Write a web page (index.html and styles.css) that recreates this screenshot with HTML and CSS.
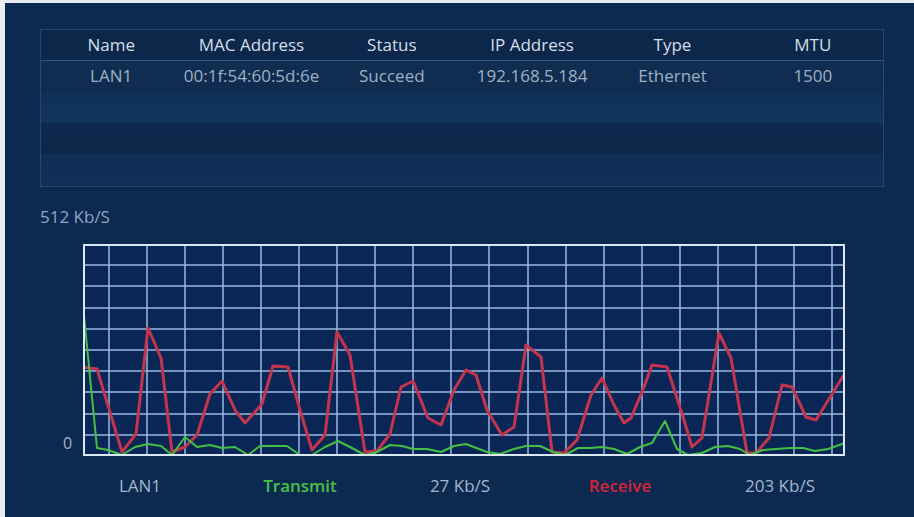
FILE: index.html
```html
<!DOCTYPE html>
<html>
<head>
<title>Network Load</title>
<link rel="stylesheet" href="styles.css">
</head>
<body>
<div class="screen">
  <!-- interface list -->
  <div class="nic-table">
    <div class="row head">
      <span>Name</span><span>MAC Address</span><span>Status</span>
      <span>IP Address</span><span>Type</span><span>MTU</span>
    </div>
    <div class="row data">
      <span>LAN1</span><span>00:1f:54:60:5d:6e</span><span>Succeed</span>
      <span>192.168.5.184</span><span>Ethernet</span><span>1500</span>
    </div>
    <div class="row blank band1"></div>
    <div class="row blank band2"></div>
    <div class="row blank band3"></div>
  </div>

  <div class="scale">512 Kb/S</div>

  <!-- traffic graph -->
  <div class="graph-row">
    <div class="zero">0</div>
    <svg class="graph" width="762" height="212" viewBox="0 0 762 212">
      <rect x="0" y="0" width="762" height="212" class="plot-bg"/>
      <path class="grid" d="M26 0V212M64 0V212M102 0V212M140 0V212M178 0V212M216 0V212M254 0V212M292 0V212M330 0V212M368 0V212M406 0V212M445 0V212M483 0V212M521 0V212M559 0V212M597 0V212M635 0V212M673 0V212M711 0V212M749 0V212
        M0 21H762M0 42H762M0 64H762M0 85H762M0 106H762M0 127H762M0 148H762M0 170H762M0 191H762"/>
      <polyline class="rx" points="0,123 14,125 39,208 53,190 65,84 78,114 89,208 102,203 114,191 127,150 139,137 152,166 162,179 179,160 190,122 205,123 217,166 229,206 242,191 254,88 267,111 282,208 294,207 307,190 318,143 330,137 345,174 358,181 371,146 383,126 393,131 404,166 419,191 431,183 443,101 458,113 469,208 481,209 494,196 508,151 519,134 531,161 541,179 548,174 561,143 569,121 584,123 601,176 609,203 619,194 636,89 648,114 664,209 673,209 686,194 699,141 709,143 723,173 733,176 762,129"/>
      <polyline class="tx" points="1,72 14,204 25,206 39,211 52,203 65,200 78,202 89,211 102,193 114,203 127,201 139,204 152,203 165,211 177,202 204,202 217,211 229,211 242,203 255,197 267,203 282,211 294,208 307,201 319,202 330,205 344,205 358,208 371,202 383,200 404,208 417,210 431,205 443,202 457,202 470,208 482,211 495,204 507,204 519,203 531,205 544,210 557,203 569,199 582,177 594,205 605,211 619,209 632,203 645,202 657,205 667,211 680,206 693,205 707,204 720,204 732,207 745,205 762,199"/>
      <rect x="1" y="1" width="760" height="210" class="frame"/>
    </svg>
  </div>

  <div class="legend">
    <span>LAN1</span>
    <span class="send">Transmit</span>
    <span>27 Kb/S</span>
    <span class="recv">Receive</span>
    <span>203 Kb/S</span>
  </div>
</div>
</body>
</html>
```
FILE: styles.css
```css
body {
	margin		: 0;
	background-color: #e9edf1;
	font-family	: "Open Sans", "DejaVu Sans", sans-serif;
}
.screen {
	margin		: 3px 0 0 5px;
	height		: 514px;
	padding		: 26px 0 0 35px;
	box-sizing	: border-box;
	background	: #0c2950;
	color		: #a3b3c6;
}
.nic-table {
	width		: 844px;
	height		: 158px;
	box-sizing	: border-box;
	border		: 1px solid #244773;
	background	: #0e2d55;
	overflow	: hidden;
}
.row {
	display		: grid;
	grid-template-columns: repeat(6, 1fr);
	align-items	: center;
	text-align	: center;
	font-size	: 17px;
	line-height	: 1;
}
.head {
	height		: 31px;
	padding-bottom	: 2px;
	box-sizing	: border-box;
	color		: #d6dfe9;
	background	: #0c2749;
	border-bottom	: 1px solid #2c5482;
}
.data {
	height		: 31px;
	padding-bottom	: 2px;
	box-sizing	: border-box;
	color		: #9fb0c3;
	background	: linear-gradient(#102e52, #0f2c50);
}
.blank { height: 31px; }
.band1 { background: linear-gradient(#0f2f57, #12355e); }
.band2 { background: linear-gradient(#0d2a4f, #0b2748); }
.band3 { background: linear-gradient(#0f2e55, #0f2f57); }

.scale {
	margin-top	: 18px;
	height		: 26px;
	font-size	: 17px;
	color		: #8fa5c0;
}
.graph-row {
	display		: flex;
	margin-top	: 13px;
}
.zero {
	width		: 43px;
	align-self	: flex-end;
	padding		: 0 0 2px 23px;
	box-sizing	: border-box;
	font-size	: 16px;
	color		: #a3b3c6;
}
.graph { display: block; }
.plot-bg { fill: #0a2656; }
.grid {
	stroke		: #98b9e0;
	stroke-width	: 1.5;
	fill		: none;
}
.frame {
	fill		: none;
	stroke		: #dbe8f6;
	stroke-width	: 2;
}
.rx {
	fill		: none;
	stroke		: #c4344d;
	stroke-width	: 3;
	stroke-linejoin	: round;
}
.tx {
	fill		: none;
	stroke		: #43c043;
	stroke-width	: 2;
	stroke-linejoin	: round;
}
.legend {
	display		: grid;
	grid-template-columns: repeat(5, 160px);
	margin		: 18px 0 0 20px;
	text-align	: center;
	font-size	: 17px;
	color		: #a5b6cb;
}
.send { color: #47c247; font-weight: 600; }
.recv { color: #d8243a; font-weight: 600; }
```
